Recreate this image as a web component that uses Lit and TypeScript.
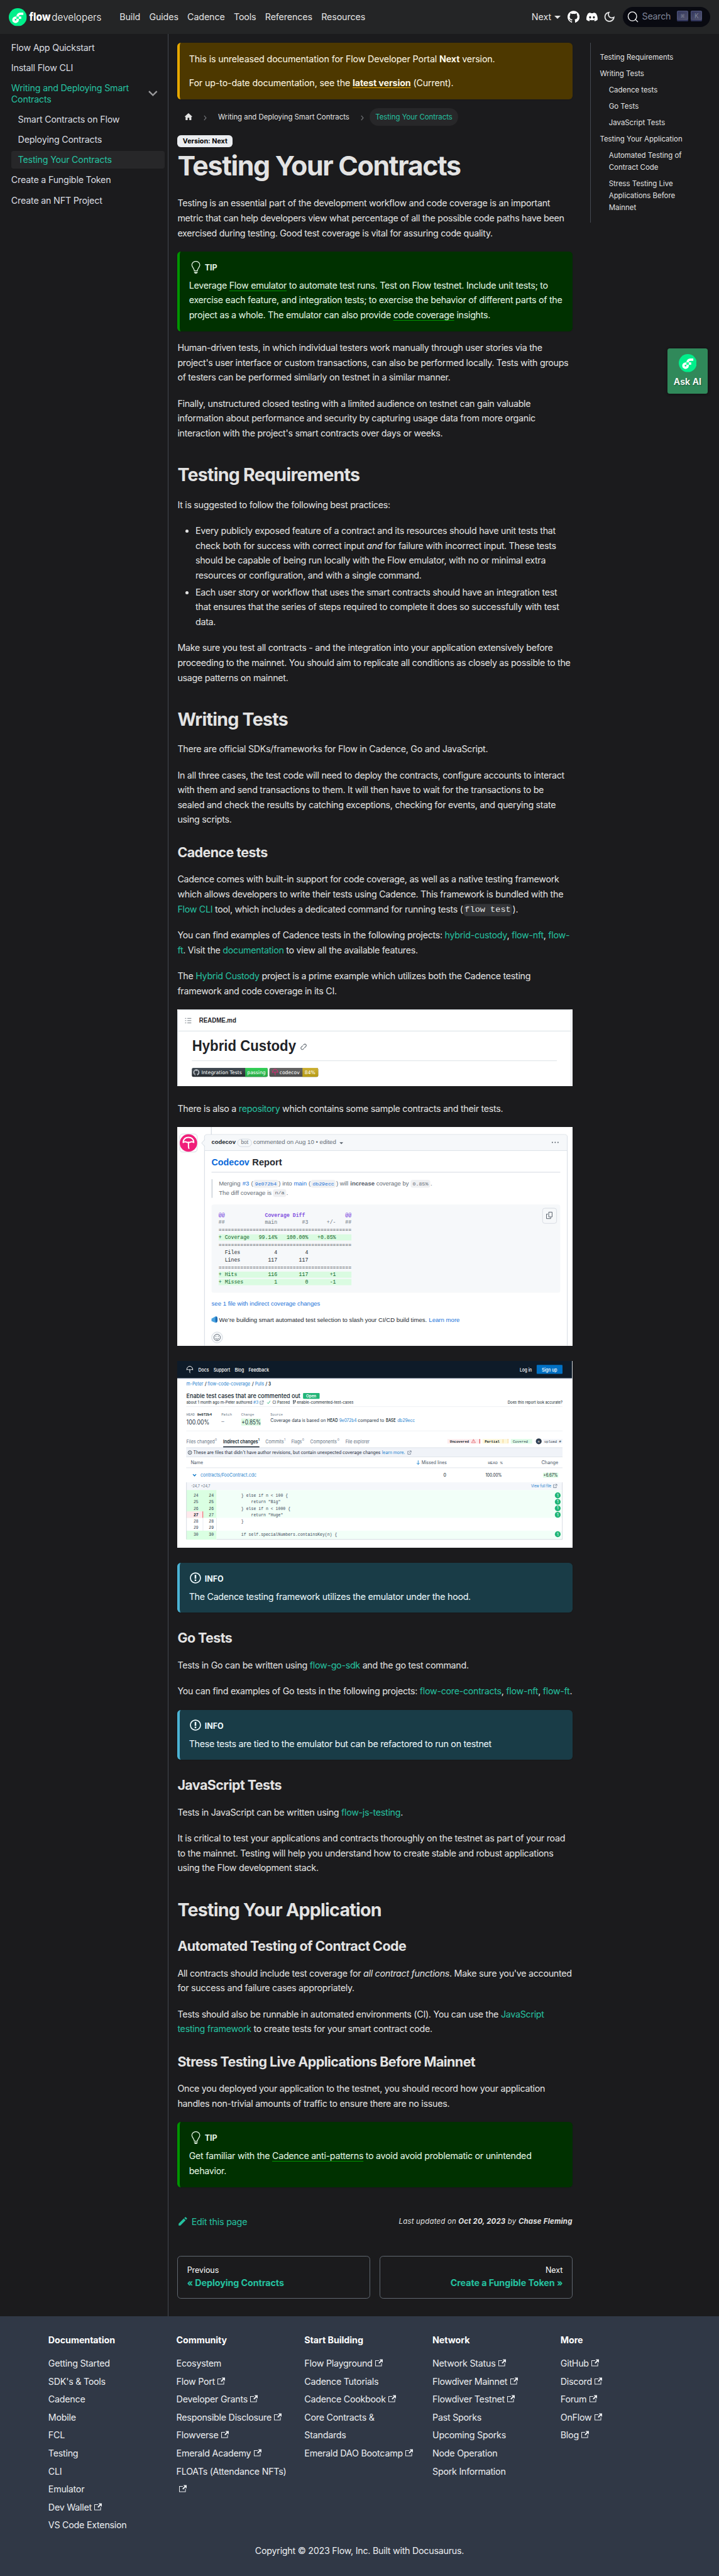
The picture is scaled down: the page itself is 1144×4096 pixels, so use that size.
import { LitElement, html, svg, css, nothing } from "lit";
import { customElement } from "lit/decorators.js";

/* ---------- icons ---------- */

const flowMark = svg`
  <circle cx="50.5" cy="50.5" r="50.5" fill="#00ef8b"></circle>
  <g transform="translate(50.5 54) scale(1.28) translate(-52.4 -51.6)">
    <path fill="#fff" d="M57.03 45.67h10.53v10.53H57.03z"></path>
    <path fill="#fff" d="M46.5 60.14a3.95 3.95 0 1 1-3.95-3.95h3.95V45.67h-3.95A14.48 14.48 0 1 0 57.03 60.14v-3.95H46.5z"></path>
    <path fill="#fff" d="M63.62 39.08h13.15V28.56H63.62A17.12 17.12 0 0 0 46.5 45.67v10.52h10.53V45.67a6.59 6.59 0 0 1 6.59-6.59z"></path>
    <path fill="#16ff99" d="M46.5 45.67h10.53v10.53H46.5z"></path>
  </g>`;

const icon = (size: number, box: string, d: string, cls = "icon") =>
  html`<svg class=${cls} width=${size} height=${size} viewBox=${box} fill="currentColor"><path d=${d}></path></svg>`;

const GITHUB =
  "M12 .297c-6.63 0-12 5.373-12 12 0 5.303 3.438 9.8 8.205 11.385.6.113.82-.258.82-.577 0-.285-.01-1.04-.015-2.04-3.338.724-4.042-1.61-4.042-1.61C4.422 18.07 3.633 17.7 3.633 17.7c-1.087-.744.084-.729.084-.729 1.205.084 1.838 1.236 1.838 1.236 1.07 1.835 2.809 1.305 3.495.998.108-.776.417-1.305.76-1.605-2.665-.3-5.466-1.332-5.466-5.93 0-1.31.465-2.38 1.235-3.22-.135-.303-.54-1.523.105-3.176 0 0 1.005-.322 3.3 1.23.96-.267 1.98-.399 3-.405 1.02.006 2.04.138 3 .405 2.28-1.552 3.285-1.23 3.285-1.23.645 1.653.24 2.873.12 3.176.765.84 1.23 1.91 1.23 3.22 0 4.61-2.805 5.625-5.475 5.92.42.36.81 1.096.81 2.22 0 1.606-.015 2.896-.015 3.286 0 .315.21.69.825.57C20.565 22.092 24 17.592 24 12.297c0-6.627-5.373-12-12-12";
const DISCORD =
  "M20.317 4.37a19.79 19.79 0 0 0-4.885-1.515.074.074 0 0 0-.079.037c-.21.375-.444.865-.608 1.25-1.845-.277-3.68-.277-5.487 0-.163-.394-.405-.875-.617-1.25a.077.077 0 0 0-.079-.037A19.736 19.736 0 0 0 3.677 4.37a.07.07 0 0 0-.032.027C.533 9.046-.319 13.58.1 18.058a.082.082 0 0 0 .031.056c2.053 1.508 4.041 2.423 5.993 3.03a.078.078 0 0 0 .084-.028c.462-.63.873-1.295 1.226-1.994a.076.076 0 0 0-.041-.106 13.1 13.1 0 0 1-1.873-.892.077.077 0 0 1-.007-.128c.126-.094.252-.192.372-.291a.074.074 0 0 1 .077-.01c3.928 1.793 8.18 1.793 12.062 0a.074.074 0 0 1 .078.009c.12.099.246.198.373.292a.077.077 0 0 1-.007.128 12.3 12.3 0 0 1-1.873.891.077.077 0 0 0-.04.107c.36.698.771 1.363 1.225 1.993a.076.076 0 0 0 .084.029c1.961-.607 3.95-1.522 6.002-3.03a.077.077 0 0 0 .032-.055c.5-5.177-.838-9.674-3.549-13.66a.061.061 0 0 0-.031-.029zM8.02 15.331c-1.183 0-2.157-1.086-2.157-2.419s.956-2.419 2.157-2.419c1.21 0 2.176 1.095 2.157 2.419 0 1.333-.956 2.419-2.157 2.419zm7.975 0c-1.183 0-2.157-1.086-2.157-2.419s.955-2.419 2.157-2.419c1.21 0 2.176 1.095 2.157 2.419 0 1.333-.946 2.419-2.157 2.419z";
const MOON =
  "M9.37,5.51C9.19,6.15,9.1,6.82,9.1,7.5c0,4.08,3.32,7.4,7.4,7.4c0.68,0,1.35-0.09,1.99-0.27C17.45,17.19,14.93,19,12,19 c-3.86,0-7-3.14-7-7C5,9.07,6.81,6.55,9.37,5.51z M12,3c-4.97,0-9,4.03-9,9s4.03,9,9,9s9-4.03,9-9c0-0.46-0.04-0.92-0.1-1.36 c-0.98,1.37-2.58,2.26-4.4,2.26c-2.98,0-5.4-2.42-5.4-5.4c0-1.81,0.89-3.42,2.26-4.4C12.92,3.04,12.46,3,12,3L12,3z";
const HOME =
  "M10 19v-5h4v5c0 .55.45 1 1 1h3c.55 0 1-.45 1-1v-7h1.7c.46 0 .68-.57.33-.87L12.67 3.6c-.38-.34-.96-.34-1.34 0l-8.36 7.53c-.34.3-.13.87.33.87H5v7c0 .55.45 1 1 1h3c.55 0 1-.45 1-1z";
const TIP =
  "M6.5 0C3.48 0 1 2.19 1 5c0 .92.55 2.25 1 3 1.34 2.25 1.78 2.78 2 4v1h5v-1c.22-1.22.66-1.75 2-4 .45-.75 1-2.08 1-3 0-2.81-2.48-5-5.5-5zm3.64 7.48c-.25.44-.47.8-.67 1.11-.86 1.41-1.25 2.06-1.45 3.23-.02.05-.02.11-.02.17H5c0-.06 0-.13-.02-.17-.2-1.17-.59-1.83-1.45-3.23-.2-.31-.42-.67-.67-1.11C2.44 6.78 2 5.65 2 5c0-2.2 2.02-4 4.5-4 1.22 0 2.36.42 3.22 1.19C10.55 2.94 11 3.94 11 5c0 .66-.44 1.78-.86 2.48zM4 14h5c-.23 1.14-1.3 2-2.5 2s-2.27-.86-2.5-2z";
const INFO =
  "M7 2.3c3.14 0 5.7 2.56 5.7 5.7s-2.56 5.7-5.7 5.7A5.71 5.71 0 0 1 1.3 8c0-3.14 2.56-5.7 5.7-5.7zM7 1C3.14 1 0 4.14 0 8s3.14 7 7 7 7-3.14 7-7-3.14-7-7-7zm1 3H6v5h2V4zm0 6H6v2h2v-2z";
const EDIT =
  "m34.5 11.7l-3 3.1-6.3-6.3 3.1-3q0.5-0.5 1.2-0.5t1.1 0.5l3.9 3.9q0.5 0.4 0.5 1.1t-0.5 1.2z m-29.5 17.1l18.4-18.5 6.3 6.3-18.4 18.4h-6.3v-6.2z";
const EXTERNAL =
  "M21 13v10h-21v-19h12v2h-10v15h17v-8h2zm3-12h-10.988l4.035 4-6.977 7.07 2.828 2.828 6.977-7.07 4.125 4.172v-11z";
const CHEVRON = "M7.41 15.41L12 10.83l4.59 4.58L18 14l-6-6-6 6z";

/* ---------- figures ---------- */

const SANS = "'Liberation Sans', Arial, sans-serif";
const MONO = "'Liberation Mono', monospace";
const INTER = "Inter, sans-serif";

interface TextOpts {
  f?: string;
  w?: number;
  c?: string;
  len?: number;
}

/** Text of a figure, centred vertically on cy. */
const t = (x: number, cy: number, size: number, text: string, o: TextOpts = {}) => svg`
  <text class="fig-text" x=${x} y=${cy + size * 0.35} font-size=${size}
    font-family=${o.f ?? SANS} font-weight=${o.w ?? 400} fill=${o.c ?? "#24292f"}
    textLength=${o.len ?? nothing} lengthAdjust="spacingAndGlyphs">${text}</text>`;

const r = (x: number, y: number, w: number, h: number, fill: string, rx = 0, stroke = "none") =>
  svg`<rect x=${x} y=${y} width=${w} height=${h} rx=${rx} fill=${fill} stroke=${stroke}></rect>`;

const extGlyph = (x: number, y: number, c = "#5b6b80") =>
  svg`<path transform="translate(${x} ${y})" fill="none" stroke=${c} stroke-width=".8" d="M2.6 1.2H.5v5.3h5V4.2M3.6.5h2.9v2.9M6.3.7L3 4"></path>`;

const umbrella = (x: number, y: number, s: number, c: string, w = 1.6) =>
  svg`<path transform="translate(${x} ${y}) scale(${s})" fill="none" stroke=${c} stroke-width=${w} stroke-linejoin="round"
    d="M1 8.2C1 4 3.8 1 7 1s6 3 6 7.2c-1.4-1.1-2.8-1.1-4-.1-1.2-.8-2.8-.8-4 0-1.2-1-2.6-1-4 .1zM7 7.8V12.500c0 1 .3 1.500 1 2"></path>`;

@customElement("figure-readme")
export class FigureReadme extends LitElement {
  static styles = css`
    :host { display: block; }
    .fig { display: block; background: #fff; }
    .fig-text { white-space: pre; }
  `;
  render() {
    return html`<svg class="fig" width="703" height="136" viewBox="0 0 703 136">
      <defs>
        <linearGradient id="dk" x1="0" y1="0" x2="0" y2="1"><stop offset="0" stop-color="#444d56"></stop><stop offset="1" stop-color="#24292e"></stop></linearGradient>
        <linearGradient id="gr" x1="0" y1="0" x2="0" y2="1"><stop offset="0" stop-color="#34d058"></stop><stop offset="1" stop-color="#28a745"></stop></linearGradient>
        <linearGradient id="gy" x1="0" y1="0" x2="0" y2="1"><stop offset="0" stop-color="#666"></stop><stop offset="1" stop-color="#4c4c4c"></stop></linearGradient>
        <linearGradient id="yl" x1="0" y1="0" x2="0" y2="1"><stop offset="0" stop-color="#cdb136"></stop><stop offset="1" stop-color="#b49912"></stop></linearGradient>
      </defs>
      <path d="M.5 136V5Q.5.5 5 .5H697Q701.500.5 701.500 5V136" fill="none" stroke="#d5dce2"></path>
      <path d="M.5 38.500H701.500" stroke="#d5dce2"></path>
      <path d="M18 16h7M18 20h7M18 24h7" stroke="#656d76"></path>
      <path d="M14 16h2M14 20h2M14 24h2" stroke="#656d76"></path>
      ${t(39, 19, 12, "README.md", { w: 700, c: "#1f2328", len: 66 })}
      ${t(26.5, 65, 26.5, "Hybrid Custody", { w: 700, c: "#1f2328", len: 185 })}
      <g transform="translate(225 66.500) rotate(-45)" fill="none" stroke="#656d76" stroke-width="1.200">
        <path d="M.5-2.400H-3.300A2.400 2.400 0 0 0-3.300 2.400H-1.500M-.5 2.400H3.300A2.400 2.400 0 0 0 3.300-2.400H1.500"></path>
      </g>
      ${r(26, 90.5, 650, 1.5, "#e4e8ec")}
      ${r(26, 104, 135, 16, "url(#dk)", 2.5)}
      <path d="M121 104h37.500q2.500 0 2.500 2.500v11q0 2.500-2.500 2.500H121z" fill="url(#gr)"></path>
      <g transform="translate(28.500 106.500) scale(.46)" fill="#b9bfc5"><path d=${GITHUB}></path></g>
      ${t(43, 112, 8.8, "Integration Tests", { f: "'DejaVu Sans', sans-serif", c: "#fff", len: 72 })}
      ${t(124.5, 112, 8.8, "passing", { f: "'DejaVu Sans', sans-serif", c: "#fff", len: 33 })}
      ${r(164, 104, 87, 16, "url(#gy)", 2.5)}
      <path d="M223 104h25.500q2.500 0 2.500 2.500v11q0 2.500-2.500 2.500H223z" fill="url(#yl)"></path>
      ${umbrella(168.5, 105.5, 0.82, "#f01f7a", 1.3)}
      ${t(182, 112, 8.8, "codecov", { f: "'DejaVu Sans', sans-serif", c: "#fff", len: 36 })}
      ${t(227, 112, 8.8, "84%", { f: "'DejaVu Sans', sans-serif", c: "#fff", len: 19 })}
    </svg>`;
  }
}

@customElement("figure-comment")
export class FigureComment extends LitElement {
  static styles = css`
    :host { display: block; }
    .fig { display: block; background: #fff; }
    .fig-text { white-space: pre; }
  `;
  private diff: [string, string, string?, number?][] = [
    ["@@             Coverage Diff             @@", "#8250df", undefined, 700],
    ["##             main        #3      +/-   ##", "#6e7781"],
    ["===========================================", "#24292f"],
    ["+ Coverage   99.14%   100.00%   +0.85%     ", "#116329", "#dafbe1"],
    ["===========================================", "#24292f"],
    ["  Files           4         4              ", "#24292f"],
    ["  Lines         117       117              ", "#24292f"],
    ["===========================================", "#24292f"],
    ["+ Hits          116       117       +1     ", "#116329", "#dafbe1"],
    ["+ Misses          1         0       -1     ", "#116329", "#dafbe1"],
  ];
  render() {
    const blue = "#1a73d9";
    const grey = "#656d76";
    return html`<svg class="fig" width="703" height="389" viewBox="0 0 703 389">
      ${r(60, 0, 1.5, 14, "#d8dee4")}
      ${r(4.5, 12.5, 31, 32, "#fff", 5, "#d0d7de")}
      <circle cx="20" cy="28.500" r="15.500" fill="#f01f7a"></circle>
      <path d="M10.500 27.500C11 21.500 15 18.500 20 18.500s9 3 9.500 9c-2.500-1.500-5-1.500-7 0-1.500-.6-3.500-.6-5 0-2-1.500-4.500-1.500-7 0zM20 27v8c0 2 .5 3 1.500 3.500" fill="none" stroke="#fff" stroke-width="2.200" stroke-linejoin="round"></path>
      <path d="M48.500 389V18Q48.500 13.500 53 13.500H690Q694.500 13.500 694.500 18V389" fill="#fff" stroke="#d0d7de"></path>
      <path d="M49 42V18Q49 14 53 14H690Q694 14 694 18V42z" fill="#f6f8fa"></path>
      <path d="M49 42H694" stroke="#d8dee4"></path>
      <path d="M49 22.500L43.500 28.500L49 34.500" fill="#f6f8fa" stroke="#d0d7de"></path>
      ${t(61, 26.8, 11, "codecov", { w: 700, len: 43 })}
      ${r(107.5, 21.5, 25, 13.5, "none", 6.7, "#d0d7de")}
      ${t(113.5, 27.2, 9.5, "bot", { c: grey, len: 13 })}
      ${t(135.5, 26.8, 11, "commented on Aug 10 • edited", { c: grey, len: 147.5 })}
      <path d="M289 27h6.500l-3.250 3.400z" fill="#57606a"></path>
      <g fill="#57606a"><circle cx="668" cy="27.500" r="1.100"></circle><circle cx="673" cy="27.500" r="1.100"></circle><circle cx="678" cy="27.500" r="1.100"></circle></g>
      ${t(61, 63, 16.5, "Codecov", { w: 700, c: "#0969da", len: 67.5 })}
      ${t(133.5, 63, 16.5, "Report", { w: 700, len: 53 })}
      ${r(61, 80, 621, 1, "#cfd6de")}
      ${r(61, 93, 2, 33, "#d0d7de")}
      ${t(74, 100.5, 11, "Merging", { c: grey, len: 38.5 })}
      ${t(116, 100.5, 11, "#3", { c: blue, len: 12 })}
      ${t(131.5, 100.5, 11, "(", { c: grey })}
      ${r(135.5, 94, 44.5, 14, "#f0f1f3", 4)}
      ${t(138.5, 100.8, 9, "9e072b4", { f: MONO, c: blue, len: 38.5 })}
      ${t(180.5, 100.5, 11, ") into", { c: grey, len: 24 })}
      ${t(207.5, 100.5, 11, "main", { c: blue, len: 23 })}
      ${t(233.8, 100.5, 11, "(", { c: grey })}
      ${r(237.5, 94, 44.5, 14, "#f0f1f3", 4)}
      ${t(241, 100.8, 9, "db29ecc", { f: MONO, c: blue, len: 38.5 })}
      ${t(283, 100.5, 11, ") will", { c: grey, len: 21.5 })}
      ${t(308, 100.5, 11, "increase", { c: "#57606a", w: 700, len: 43.5 })}
      ${t(354.5, 100.5, 11, "coverage by", { c: grey, len: 58 })}
      ${r(415.5, 94, 35, 14, "#f0f1f3", 4)}
      ${t(419, 100.8, 9, "0.85%", { f: MONO, c: grey, len: 28 })}
      ${t(451, 100.5, 11, ".", { c: grey })}
      ${t(74, 116.5, 11, "The diff coverage is", { c: grey, len: 94 })}
      ${r(170.5, 110.5, 23.5, 14, "#f0f1f3", 4)}
      ${t(174, 117, 9, "n/a", { f: MONO, c: grey, len: 17 })}
      ${t(194.5, 116.5, 11, ".", { c: grey })}
      ${r(61, 138, 621, 157, "#f6f8fa", 4)}
      ${this.diff.map(
        ([text, c, bg, w], i) => svg`
          ${bg ? r(73.7, 191 + (i - 3) * 13.25, 236.5, 11, bg) : nothing}
          ${t(73.7, 156.4 + i * 13.25, 9.16, text, { f: MONO, c, w, len: 236.4 })}`
      )}
      ${r(650.5, 144.5, 25, 27, "#f6f8fa", 4, "#d4d9df")}
      <path d="M661.500 151.500h6v8.500h-6zM660 155h-2.500v8h7.500v-2.500" fill="none" stroke="#57606a" stroke-width="1.100"></path>
      ${t(61, 314.5, 11, "see 1 file with indirect coverage changes", { c: blue, len: 193.5 })}
      <path d="M61 341l8-4.500v12l-8-3z" fill="#4aa3e0"></path><ellipse cx="69.800" cy="342.500" rx="2" ry="5.500" fill="#1b6bb5"></ellipse>
      ${t(74.5, 343, 11, "We’re building smart automated test selection to slash your CI/CD build times.", { len: 370 })}
      ${t(448, 343, 11, "Learn more", { c: blue, len: 55 })}
      <circle cx="71" cy="374.500" r="9.700" fill="#f6f8fa" stroke="#d0d7de"></circle>
      <g fill="none" stroke="#57606a" stroke-width="1.100"><circle cx="71" cy="374.500" r="5.700"></circle><path d="M68 376.300q3 3.200 6 0M68.900 372v1.400M73.100 372v1.400"></path></g>
    </svg>`;
  }
}

@customElement("figure-coverage")
export class FigureCoverage extends LitElement {
  static styles = css`
    :host { display: block; }
    .fig { display: block; background: #fff; }
    .fig-text { white-space: pre; }
  `;
  private lines: [number, string, boolean][] = [
    [24, "} else if n < 100 {", true],
    [25, "    return \"Big\"", true],
    [26, "} else if n < 1000 {", true],
    [27, "    return \"Huge\"", true],
    [28, "}", false],
    [29, "", false],
    [30, "if self.specialNumbers.containsKey(n) {", true],
  ];
  render() {
    const I = (x: number, y: number, s: number, text: string, len: number, c = "#0e1b29", w = 400) =>
      t(x, y, s, text, { f: INTER, len, c, w });
    const blue = "#1f83cf";
    const grey = "#6b7787";
    return html`<svg class="fig" width="703" height="332" viewBox="0 0 703 332">
      ${r(0, 0, 703, 31, "#0e1b29")} ${r(0, 30.5, 703, 1.2, "#9aa3b5")}
      ${umbrella(16, 8.5, 0.9, "#fff", 1.2)}
      ${I(37.5, 15.5, 8.6, "Docs", 19, "#fff", 500)}
      ${I(64.5, 15.5, 8.6, "Support", 29.5, "#fff", 500)}
      ${I(102.5, 15.5, 8.6, "Blog", 16.5, "#fff", 500)}
      ${I(127, 15.5, 8.6, "Feedback", 36.5, "#fff", 500)}
      ${I(610, 15.5, 8.6, "Log in", 21.5, "#fff", 500)}
      ${r(640, 7, 46, 16, "#0071c5", 1.5)}
      ${I(649, 15.5, 8.6, "Sign up", 27.5, "#fff", 500)}
      ${I(16.3, 41, 8.6, "m-Peter", 30, blue)} ${I(49, 41, 9, "/", 3.5)}
      ${I(54, 41, 8.6, "flow-code-coverage", 76, blue)} ${I(133, 41, 9, "/", 3.5)}
      ${I(138.5, 41, 8.6, "Pulls", 16, blue)} ${I(157, 41, 9, "/", 3.5)}
      ${I(162.3, 41, 8.6, "3", 4.5, "#0e1b29", 600)}
      ${I(16.3, 62, 10.3, "Enable test cases that are commented out", 203, "#0e1b29", 500)}
      ${r(224, 57, 29.5, 10.5, "#21b577", 1.5)} ${I(229.5, 62.3, 7, "Open", 18, "#fff", 600)}
      ${I(16.3, 73.8, 7.2, "about 1 month ago m-Peter authored", 117)} ${I(135.5, 73.8, 7.2, "#3", 9, blue)}
      ${extGlyph(147, 70.5)}
      <path d="M160 74l2 2 3.500-5" fill="none" stroke="#21b577"></path>
      ${I(169.5, 73.8, 7.2, "CI Passed", 31)}
      <path d="M207 71v5.500M207 75c3 0 3-1 3-3.500" fill="none" stroke="#0e1b29" stroke-width=".9"></path><circle cx="207" cy="71" r="1" fill="#0e1b29"></circle><circle cx="210" cy="71" r="1" fill="#0e1b29"></circle>
      ${I(212.8, 73.8, 7.2, "enable-commented-test-cases", 101)}
      ${I(588.5, 73.8, 7.2, "Does this report look accurate?", 97.5)}
      ${r(16, 81, 670, 0.8, "#e8ebf0")}
      ${t(16.3, 95.3, 6.5, "HEAD", { f: MONO, c: grey, len: 15 })} ${t(35.5, 95.3, 6.5, "9e072b4", { f: MONO, c: "#0e1b29", w: 700, len: 26 })}
      ${t(78.5, 95.3, 6.5, "Patch", { f: MONO, c: grey, len: 19 })}
      ${t(114, 95.3, 6.5, "Change", { f: MONO, c: grey, len: 23 })}
      ${t(166, 95.3, 6.5, "Source", { f: MONO, c: grey, len: 22 })}
      ${I(16.3, 109, 11, "100.00%", 41, "#2b3848")} ${I(78.5, 108, 9, "–", 5, grey)}
      ${r(114, 102.5, 35, 12.5, "#dcfbe2")} ${I(114.5, 109, 11, "+0.85%", 34.5, "#2b3848")}
      ${I(166, 106.3, 8, "Coverage data is based on", 98.5, "#2b3848")} ${I(267, 106.3, 8, "HEAD", 19, "#0e1b29", 500)}
      ${I(288.5, 106.3, 8, "9e072b4", 31, blue)} ${I(321.5, 106.3, 8, "compared to", 47, "#2b3848")}
      ${I(371.5, 106.3, 8, "BASE", 17.5, "#0e1b29", 500)} ${I(392, 106.3, 8, "db29ecc", 31, blue)}
      ${r(16, 124, 670, 0.8, "#e8ebf0")}
      ${I(16.3, 143, 8.8, "Files changed", 50.5, grey)} ${I(67.3, 140, 5.5, "0", 3.5, grey)}
      ${I(81.8, 143, 8.8, "Indirect changes", 62, "#0e1b29", 600)} ${I(144, 140, 5.5, "1", 2.3, "#0e1b29", 600)}
      ${I(157, 143, 8.8, "Commits", 33, grey)} ${I(190.5, 140, 5.5, "1", 2, grey)}
      ${I(203, 143, 8.8, "Flags", 19, grey)} ${I(222.5, 140, 5.5, "0", 3.5, grey)}
      ${I(236.8, 143, 8.8, "Components", 47.5, grey)} ${I(285, 140, 5.5, "0", 3.5, grey)}
      ${I(299.5, 143, 8.8, "File explorer", 43, grey)}
      ${r(81.8, 152, 64.5, 2.2, "#0e1b29")}
      ${r(481, 139, 57, 8, "#fdecee")} ${r(538, 139, 1.2, 8, "#d9363e")}
      ${t(485.5, 143, 6.5, "Uncovered", { f: MONO, w: 700, c: "#0e1b29", len: 34 })}
      <path d="M524 145.500l3.500-6 3.500 6zM527.500 141.500v2" fill="none" stroke="#e0555c" stroke-width=".8"></path>
      ${r(543.5, 139, 45, 8, "#fdf7da")} ${t(547.5, 143, 6.5, "Partial", { f: MONO, w: 700, c: "#0e1b29", len: 26.5 })}
      <path d="M580 140v6M589 139v8" stroke="#f0b13c" stroke-dasharray="1.500 1"></path>
      ${r(594, 139, 38, 8, "#dcfbe6")} ${t(597.5, 143, 6.5, "Covered", { f: MONO, c: "#2b3848", len: 27 })}
      <circle cx="643.700" cy="143" r="5.200" fill="#2e3c4e"></circle> ${I(641.8, 143, 6, "n", 3.6, "#fff")}
      ${r(651, 139, 35, 8, "#f3f5f9")} ${t(653.5, 143, 6.5, "upload #", { f: MONO, c: "#2b3848", len: 30 })}
      ${r(16, 154, 670, 17, "#f0f3f8")} ${r(16, 154, 670, 0.8, "#d8dde5")} ${r(16, 170.5, 670, 0.8, "#d8dde5")}
      <circle cx="22.500" cy="163" r="3.200" fill="none" stroke="#0e1b29" stroke-width=".8"></circle><path d="M22.500 162.500v2M22.500 161v.8" stroke="#0e1b29" stroke-width=".8"></path>
      ${I(28.5, 163, 8.2, "These are files that didn't have author revisions, but contain unexpected coverage changes", 333.5, "#1c2a3a")}
      ${I(364.5, 163, 8.2, "learn more.", 41, blue)} ${extGlyph(410, 159.5)}
      ${I(24, 180.5, 8.2, "Name", 22, "#4a5666")}
      <path d="M429 177v7M426.500 181.500l2.500 2.800 2.500-2.800" fill="none" stroke="#1f83cf"></path>
      ${I(435, 180.5, 8.2, "Missed lines", 45, "#4a5666")}
      ${t(553, 180.7, 7, "HEAD %", { f: MONO, c: "#4a5666", len: 26.5 })} ${I(648.5, 180.5, 8.2, "Change", 30, "#4a5666")}
      ${r(16, 189.5, 670, 1.2, "#e3e7ed")}
      <path d="M28 201.500l2.800 3 2.800-3" fill="none" stroke="#0071c5" stroke-width="1.400"></path>
      ${I(41.5, 203.3, 8.4, "contracts/FooContract.cdc", 99.5, blue)} ${I(474, 203.3, 8, "0", 5)} ${I(549, 203.3, 8, "100.00%", 29)}
      ${r(651.5, 199, 27, 8.5, "#dcfbe2")} ${I(652, 203.3, 8, "+6.67%", 25.5)}
      ${r(16, 216, 670, 13.7, "#f5f7fb")}
      ${I(24.8, 222.7, 7, "-24,7 +24,7", 34, grey)} ${I(630, 222.7, 7, "View full file", 36, blue)} ${extGlyph(669.5, 219)}
      ${r(16, 229.7, 54, 49.5, "#daffe2")} ${r(70, 229.7, 616, 49.5, "#f2fff8")}
      ${r(16, 302, 54, 16, "#daffe2")} ${r(70, 302, 616, 15.5, "#f2fff8")}
      ${r(16, 267.7, 29, 11.5, "#ffe9ec")} ${r(44.7, 267.7, 1.5, 11.5, "#f27b80")}
      ${r(45.5, 279.2, 0.7, 23, "#dde2e9")} ${r(69.5, 279.2, 0.7, 23, "#dde2e9")}
      <path d="M16.400 216V317M685.600 216V317.500M70 317.500H686" fill="none" stroke="#cfd5de" stroke-width=".9"></path>
      ${this.lines.map(([n, text, hit], i) => {
        const y = 239.2 + i * 11.52;
        const miss = n === 27;
        return svg`
          ${t(29, y, 7.3, String(n), { f: MONO, c: miss ? "#0e1b29" : "#3b4858", w: miss ? 700 : 400 })}
          ${t(56.3, y, 7.3, String(n), { f: MONO, c: "#2b3848" })}
          ${text ? t(114, y, 7.3, text, { f: MONO, c: "#3b4858" }) : nothing}
          ${hit ? svg`<circle cx="677.500" cy=${y} r="5.200" fill="#21b577"></circle>${I(676, y, 6.5, "1", 3, "#fff")}` : nothing}`;
      })}
    </svg>`;
  }
}

/* ---------- page ---------- */

type FooterLink = [string, boolean?];
const FOOTER: { title: string; links: FooterLink[] }[] = [
  {
    title: "Documentation",
    links: [["Getting Started"], ["SDK's & Tools"], ["Cadence"], ["Mobile"], ["FCL"], ["Testing"], ["CLI"], ["Emulator"], ["Dev Wallet", true], ["VS Code Extension"]],
  },
  {
    title: "Community",
    links: [["Ecosystem"], ["Flow Port", true], ["Developer Grants", true], ["Responsible Disclosure", true], ["Flowverse", true], ["Emerald Academy", true], ["FLOATs (Attendance NFTs)", true]],
  },
  {
    title: "Start Building",
    links: [["Flow Playground", true], ["Cadence Tutorials"], ["Cadence Cookbook", true], ["Core Contracts & Standards"], ["Emerald DAO Bootcamp", true]],
  },
  {
    title: "Network",
    links: [["Network Status", true], ["Flowdiver Mainnet", true], ["Flowdiver Testnet", true], ["Past Sporks"], ["Upcoming Sporks"], ["Node Operation"], ["Spork Information"]],
  },
  { title: "More", links: [["GitHub", true], ["Discord", true], ["Forum", true], ["OnFlow", true], ["Blog", true]] },
];

const TOC: [string, boolean][] = [
  ["Testing Requirements", false],
  ["Writing Tests", false],
  ["Cadence tests", true],
  ["Go Tests", true],
  ["JavaScript Tests", true],
  ["Testing Your Application", false],
  ["Automated Testing of Contract Code", true],
  ["Stress Testing Live Applications Before Mainnet", true],
];

@customElement("app-root")
export class AppRoot extends LitElement {
  static styles = css`
    :host { display: block; overflow: hidden; min-height: 4096px; background: #303846; }
    * { box-sizing: border-box; }
    .page {
      zoom: 0.8936;
      position: relative;
      font: 400 16px/1.65 Inter, sans-serif;
      color: #e3e3e3;
      background: #1b1b1d;
    }
    a { color: #25c2a0; text-decoration: none; }
    p { margin: 0 0 20px; }
    svg { flex: none; }

    .navbar { height: 60px; padding: 0 16px; display: flex; align-items: center; background: #242526; }
    .logo { display: block; margin-right: 20px; overflow: visible; }
    .nav-link { padding: 0 8px; color: #e3e3e3; white-space: nowrap; letter-spacing: -0.009em; }
    .spacer { flex: 1; }
    .caret { width: 0; height: 0; margin: 2px 13px 0 5px; border: 6.4px solid transparent; border-top-color: #e3e3e3; border-bottom: 0; }
    .nav-icon { color: #fff; }
    .gh { margin-right: 12px; }
    .dc { margin-right: 9px; }
    .moon { margin-right: 12px; color: #e3e3e3; }
    .search { width: 155px; height: 36px; padding: 0 14px 0 8px; border-radius: 40px; background: #090a11; display: flex; align-items: center; color: #7f8497; }
    .search-icon { width: 20px; height: 20px; margin-right: 6px; }
    .search-label { flex: 1; line-height: 34px; margin-top: -2px; letter-spacing: -0.02em; }
    .key { width: 20px; height: 18px; margin: -3px 0 0 5px; border-radius: 3px; display: flex; align-items: center; justify-content: center; font-size: 11px; line-height: 1; color: #7f8497; background: linear-gradient(-26.5deg, #565872, #31355b); box-shadow: inset 0 -2px 0 0 #282d55, inset 0 0 1px 1px #51577d; }
    .key.small { font-size: 8px; }

    .layout { display: flex; align-items: stretch; }
    .sidebar { width: 300px; flex: none; padding: 8.5px 6px 0 20px; border-right: 1px solid #444950; line-height: 20px; color: #dadde1; letter-spacing: -0.015em; }
    .menu-item { padding: 6px 0; margin-bottom: 4px; border-radius: 4px; }
    .menu-item.nested { padding-left: 12px; }
    .menu-item.group { display: flex; align-items: center; justify-content: space-between; padding-right: 5px; color: #25c2a0; }
    .menu-item.on { background: #272729; color: #25c2a0; }
    .chev { transform: rotate(180deg); color: #9a9a9c; margin: -6px 0; }
    .menu-text { width: 230px; }

    .doc { width: 703px; margin: 16px 16px 32px; flex: none; }
    .doc p, .doc li { letter-spacing: -0.0205em; white-space: nowrap; }
    .toc { margin: 16px 16px 0 16px; height: 320px; padding: 16px 16px 0 16px; border-left: 1px solid #444950; flex: 1; display: flex; flex-direction: column; gap: 8px; font-size: 12.8px; line-height: 21.12px; color: #e3e3e3; }
    .toc-item.deep { padding-left: 16px; }

    .admonition { border-left: 5px solid; border-radius: 6.4px; padding: 16px; margin-bottom: 16px; box-shadow: 0 1px 2px rgba(0, 0, 0, 0.1); }
    .warning { background: #4d3800; border-color: #e6a700; color: #fff8e6; }
    .doc .warning p { margin-bottom: 16px; letter-spacing: -0.01em; }
    .doc .admonition p:last-child { margin: 0; }
    .warning a { color: inherit; font-weight: 700; text-decoration: underline; text-decoration-color: #e6a700; text-decoration-thickness: 1.5px; text-underline-offset: 2.5px; }
    .tip { background: #003100; border-color: #009400; color: #e6f6e6; }
    .tip a { color: inherit; text-decoration: underline; text-decoration-color: #009400; text-underline-offset: 3px; }
    .info { background: #193c47; border-color: #4cb3d4; color: #eef9fd; }
    .ad-head { display: flex; align-items: center; gap: 5.6px; height: 26px; margin-bottom: 4.8px; font-size: 14px; font-weight: 700; line-height: 17.5px; }
    .ad-icon { width: 22.4px; height: 22.4px; margin-top: -3px; }

    .crumbs { display: flex; align-items: center; font-size: 12.8px; line-height: 21.12px; margin-bottom: 16px; letter-spacing: -0.003em; }
    .crumb { padding: 5.12px 10.24px; border-radius: 24px; white-space: nowrap; }
    .crumb.on { color: #25c2a0; background: #272729; }
    .crumb.home { display: flex; align-items: center; height: 31.36px; }
    .sep { width: 8px; height: 10px; margin: 2px 9px 0; color: #75777b; }
    .sep.first { margin-left: 7px; }
    .badge { display: block; width: fit-content; height: 22px; padding: 0 9.5px; border-radius: 6.4px; font-size: 12px; font-weight: 700; line-height: 21.5px; color: #000; background: #ebedf0; }

    h1, h2, h3 { font-weight: 700; line-height: 1.25; margin: 0 0 20px; white-space: nowrap; }
    h1 { font-size: 48px; margin: 3px 0 23.5px; letter-spacing: -0.0315em; }
    h2 { font-size: 32px; margin-top: 40.8px; letter-spacing: -0.026em; }
    h3 { font-size: 24px; margin-top: 30px; letter-spacing: -0.0262em; }
    ul { margin: 0 0 20px; padding-left: 32px; }
    li + li { margin-top: 4px; }
    .code { font: 15.2px "Liberation Mono", monospace; letter-spacing: 0; background: #333437; border: 1.6px solid #2a2b2d; border-radius: 6.4px; padding: 1.6px 2px; }
    .figure { display: block; margin-bottom: 27px; }

    .meta { display: flex; align-items: center; justify-content: space-between; margin-top: 48px; }
    .edit { display: flex; align-items: center; gap: 5px; letter-spacing: -0.015em; }
    .updated { font-size: 12.8px; font-style: italic; letter-spacing: 0.018em; }
    .pager { display: grid; grid-template-columns: 1fr 1fr; gap: 16px; margin-top: 48px; }
    .pager-card { border: 1px solid #606770; border-radius: 6.4px; padding: 16px; line-height: 20px; font-weight: 700; color: #25c2a0; letter-spacing: -0.005em; }
    .pager-sub { font-size: 14px; line-height: 17.5px; margin-bottom: 4px; font-weight: 400; color: #fff; }
    .pager-card.right { text-align: right; }

    .footer { background: #303846; padding: 32px 0 32px 70px; color: #ebedf0; letter-spacing: -0.018em; }
    .footer-cols { display: grid; grid-template-columns: repeat(5, 228px); height: 372px; }
    .footer-col { padding: 0 14px 0 16px; line-height: 32px; }
    .footer-title { font-weight: 700; line-height: 20px; margin-bottom: 16px; color: #fff; letter-spacing: -0.005em; }
    .ext { margin-left: 4.8px; }
    .copyright { text-align: center; line-height: 26.4px; margin-left: -70px; }

    .ask { position: absolute; top: 620px; right: 20px; width: 72px; height: 80px; border-radius: 4px; background: #30895a; box-shadow: 0 1px 5px rgba(0, 0, 0, 0.4); display: flex; flex-direction: column; align-items: center; padding-top: 10px; color: #fff; font-weight: 600; line-height: 34px; text-shadow: 1px 1px 2px rgba(0, 0, 0, 0.4); }
  `;

  private admonition(kind: "tip" | "info", body: unknown) {
    return html`<div class="admonition ${kind}">
      <div class="ad-head">
        ${kind === "tip" ? icon(22.4, "0 0 12 16", TIP, "ad-icon") : icon(22.4, "0 0 14 16", INFO, "ad-icon")}
        <span>${kind.toUpperCase()}</span>
      </div>
      <p>${body}</p>
    </div>`;
  }

  private sep(cls = "") {
    return html`<svg class="sep ${cls}" viewBox="0 0 8 10" fill="none" stroke="currentColor" stroke-width="1.300"><path d="M2 1l3.500 4L2 9"></path></svg>`;
  }

  private navbar() {
    return html`<nav class="navbar">
      <svg class="logo" width="169" height="32" viewBox="0 0 169 32">
        <svg width="32" height="32" viewBox="0 0 101 101">${flowMark}</svg>
        <text x="36.500" y="22.800" font-size="19" font-weight="800" fill="#fff" textLength="38" lengthAdjust="spacingAndGlyphs">flow</text>
        <text x="76.500" y="22.800" font-size="18.500" font-weight="300" fill="#fff" textLength="88.500" lengthAdjust="spacingAndGlyphs">developers</text>
      </svg>
      ${["Build", "Guides", "Cadence", "Tools", "References", "Resources"].map((l) => html`<a class="nav-link">${l}</a>`)}
      <div class="spacer"></div>
      <span>Next</span><span class="caret"></span>
      ${icon(21.5, "0 0 24 24", GITHUB, "nav-icon gh")}
      ${icon(20, "0 0 24 24", DISCORD, "nav-icon dc")}
      ${icon(24, "0 0 24 24", MOON, "moon")}
      <div class="search">
        <svg class="search-icon" viewBox="0 0 20 20" fill="none" stroke="#fff" stroke-width="1.500" stroke-linecap="round"><ellipse cx="9.200" cy="9" rx="7.600" ry="8"></ellipse><path d="M14.600 14.600l4 4"></path></svg>
        <span class="search-label">Search</span>
        <span class="key small">⌘</span><span class="key">K</span>
      </div>
    </nav>`;
  }

  private sidebar() {
    return html`<aside class="sidebar">
      <div class="menu-item">Flow App Quickstart</div>
      <div class="menu-item">Install Flow CLI</div>
      <div class="menu-item group"><span class="menu-text">Writing and Deploying Smart Contracts</span>${icon(32, "0 0 24 24", CHEVRON, "chev")}</div>
      <div class="menu-item nested">Smart Contracts on Flow</div>
      <div class="menu-item nested">Deploying Contracts</div>
      <div class="menu-item nested on">Testing Your Contracts</div>
      <div class="menu-item">Create a Fungible Token</div>
      <div class="menu-item">Create an NFT Project</div>
    </aside>`;
  }

  private article() {
    return html`
      <div class="admonition warning">
        <p>This is unreleased documentation for Flow Developer Portal <b>Next</b> version.</p>
        <p>For up-to-date documentation, see the <a>latest version</a> (Current).</p>
      </div>
      <div class="crumbs">
        <span class="crumb home">${icon(17.6, "0 0 24 24", HOME)}</span>${this.sep("first")}
        <span class="crumb">Writing and Deploying Smart Contracts</span>${this.sep()}
        <span class="crumb on">Testing Your Contracts</span>
      </div>
      <span class="badge">Version: Next</span>
      <h1>Testing Your Contracts</h1>
      <p>Testing is an essential part of the development workflow and code coverage is an important<br>metric that can help developers view what percentage of all the possible code paths have been<br>exercised during testing. Good test coverage is vital for assuring code quality.</p>
      ${this.admonition("tip", html`Leverage <a>Flow emulator</a> to automate test runs. Test on Flow testnet. Include unit tests; to<br>exercise each feature, and integration tests; to exercise the behavior of different parts of the<br>project as a whole. The emulator can also provide <a>code coverage</a> insights.`)}
      <p>Human-driven tests, in which individual testers work manually through user stories via the<br>project's user interface or custom transactions, can also be performed locally. Tests with groups<br>of testers can be performed similarly on testnet in a similar manner.</p>
      <p>Finally, unstructured closed testing with a limited audience on testnet can gain valuable<br>information about performance and security by capturing usage data from more organic<br>interaction with the project's smart contracts over days or weeks.</p>

      <h2>Testing Requirements</h2>
      <p>It is suggested to follow the following best practices:</p>
      <ul>
        <li>Every publicly exposed feature of a contract and its resources should have unit tests that<br>check both for success with correct input <i>and</i> for failure with incorrect input. These tests<br>should be capable of being run locally with the Flow emulator, with no or minimal extra<br>resources or configuration, and with a single command.</li>
        <li>Each user story or workflow that uses the smart contracts should have an integration test<br>that ensures that the series of steps required to complete it does so successfully with test<br>data.</li>
      </ul>
      <p>Make sure you test all contracts - and the integration into your application extensively before<br>proceeding to the mainnet. You should aim to replicate all conditions as closely as possible to the<br>usage patterns on mainnet.</p>

      <h2>Writing Tests</h2>
      <p>There are official SDKs/frameworks for Flow in Cadence, Go and JavaScript.</p>
      <p>In all three cases, the test code will need to deploy the contracts, configure accounts to interact<br>with them and send transactions to them. It will then have to wait for the transactions to be<br>sealed and check the results by catching exceptions, checking for events, and querying state<br>using scripts.</p>

      <h3>Cadence tests</h3>
      <p>Cadence comes with built-in support for code coverage, as well as a native testing framework<br>which allows developers to write their tests using Cadence. This framework is bundled with the<br><a>Flow CLI</a> tool, which includes a dedicated command for running tests (<span class="code">flow test</span>).</p>
      <p>You can find examples of Cadence tests in the following projects: <a>hybrid-custody</a>, <a>flow-nft</a>, <a>flow-<br>ft</a>. Visit the <a>documentation</a> to view all the available features.</p>
      <p>The <a>Hybrid Custody</a> project is a prime example which utilizes both the Cadence testing<br>framework and code coverage in its CI.</p>
      <figure-readme class="figure"></figure-readme>
      <p>There is also a <a>repository</a> which contains some sample contracts and their tests.</p>
      <figure-comment class="figure"></figure-comment>
      <figure-coverage class="figure"></figure-coverage>
      ${this.admonition("info", "The Cadence testing framework utilizes the emulator under the hood.")}

      <h3>Go Tests</h3>
      <p>Tests in Go can be written using <a>flow-go-sdk</a> and the go test command.</p>
      <p>You can find examples of Go tests in the following projects: <a>flow-core-contracts</a>, <a>flow-nft</a>, <a>flow-ft</a>.</p>
      ${this.admonition("info", "These tests are tied to the emulator but can be refactored to run on testnet")}

      <h3>JavaScript Tests</h3>
      <p>Tests in JavaScript can be written using <a>flow-js-testing</a>.</p>
      <p>It is critical to test your applications and contracts thoroughly on the testnet as part of your road<br>to the mainnet. Testing will help you understand how to create stable and robust applications<br>using the Flow development stack.</p>

      <h2>Testing Your Application</h2>
      <h3>Automated Testing of Contract Code</h3>
      <p>All contracts should include test coverage for <i>all contract functions</i>. Make sure you've accounted<br>for success and failure cases appropriately.</p>
      <p>Tests should also be runnable in automated environments (CI). You can use the <a>JavaScript<br>testing framework</a> to create tests for your smart contract code.</p>
      <h3>Stress Testing Live Applications Before Mainnet</h3>
      <p>Once you deployed your application to the testnet, you should record how your application<br>handles non-trivial amounts of traffic to ensure there are no issues.</p>
      ${this.admonition("tip", html`Get familiar with the <a>Cadence anti-patterns</a> to avoid avoid problematic or unintended<br>behavior.`)}

      <div class="meta">
        <a class="edit">${icon(20, "0 0 40 40", EDIT)}<span>Edit this page</span></a>
        <span class="updated">Last updated on <b>Oct 20, 2023</b> by <b>Chase Fleming</b></span>
      </div>
      <div class="pager">
        <div class="pager-card"><div class="pager-sub">Previous</div>« Deploying Contracts</div>
        <div class="pager-card right"><div class="pager-sub">Next</div>Create a Fungible Token »</div>
      </div>`;
  }

  private footer() {
    return html`<footer class="footer">
      <div class="footer-cols">
        ${FOOTER.map(
          (col) => html`<div class="footer-col">
            <div class="footer-title">${col.title}</div>
            ${col.links.map(([label, ext]) => html`<div>${label}${ext ? icon(13.5, "0 0 24 24", EXTERNAL, "ext") : nothing}</div>`)}
          </div>`
        )}
      </div>
      <div class="copyright">Copyright © 2023 Flow, Inc. Built with Docusaurus.</div>
    </footer>`;
  }

  render() {
    return html`<div class="page">
      ${this.navbar()}
      <div class="layout">
        ${this.sidebar()}
        <main class="doc">${this.article()}</main>
        <div class="toc">${TOC.map(([label, deep]) => html`<div class="toc-item ${deep ? "deep" : ""}">${label}</div>`)}</div>
      </div>
      ${this.footer()}
      <div class="ask">
        <svg width="32" height="32" viewBox="0 0 101 101">${flowMark}</svg>
        <span>Ask AI</span>
      </div>
    </div>`;
  }
}
